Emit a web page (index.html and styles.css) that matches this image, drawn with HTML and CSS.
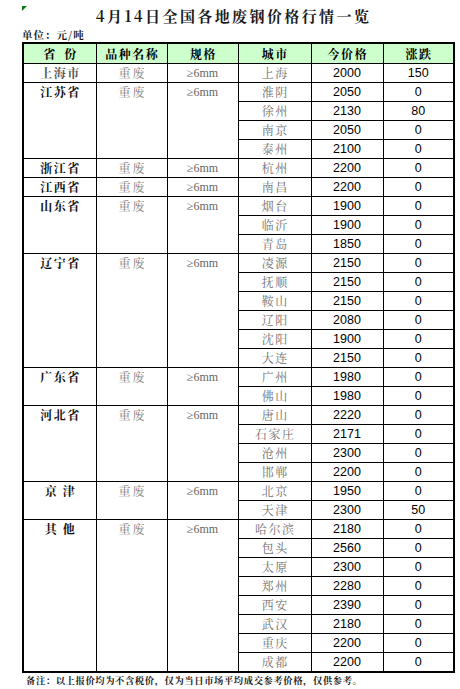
FILE: index.html
```html
<!DOCTYPE html>
<html lang="zh-CN">
<head>
<meta charset="utf-8">
<title>4月14日全国各地废钢价格行情一览</title>
<link rel="stylesheet" href="styles.css">
</head>
<body>
<div class="page">
  <div class="title-row">
    <span class="marker"></span>
    <h1 class="title">4月14日全国各地废钢价格行情一览</h1>
  </div>
  <div class="unit">单位：元/吨</div>
  <table class="prices">
    <colgroup>
      <col class="c-prov"><col class="c-kind"><col class="c-spec"><col class="c-city"><col class="c-price"><col class="c-chg">
    </colgroup>
    <thead>
      <tr><th class="wide">省份</th><th>品种名称</th><th>规格</th><th>城市</th><th>今价格</th><th>涨跌</th></tr>
    </thead>
    <tbody>
      <tr><td class="prov light">上海市</td><td class="kind">重废</td><td class="spec">≥6mm</td><td class="city">上海</td><td class="num">2000</td><td class="num">150</td></tr>

      <tr><td class="prov" rowspan="4">江苏省</td><td class="kind" rowspan="4">重废</td><td class="spec" rowspan="4">≥6mm</td><td class="city">淮阴</td><td class="num">2050</td><td class="num">0</td></tr>
      <tr><td class="city">徐州</td><td class="num">2130</td><td class="num">80</td></tr>
      <tr><td class="city">南京</td><td class="num">2050</td><td class="num">0</td></tr>
      <tr><td class="city">泰州</td><td class="num">2100</td><td class="num">0</td></tr>

      <tr><td class="prov">浙江省</td><td class="kind">重废</td><td class="spec">≥6mm</td><td class="city">杭州</td><td class="num">2200</td><td class="num">0</td></tr>

      <tr><td class="prov">江西省</td><td class="kind">重废</td><td class="spec">≥6mm</td><td class="city">南昌</td><td class="num">2200</td><td class="num">0</td></tr>

      <tr><td class="prov" rowspan="3">山东省</td><td class="kind" rowspan="3">重废</td><td class="spec" rowspan="3">≥6mm</td><td class="city">烟台</td><td class="num">1900</td><td class="num">0</td></tr>
      <tr><td class="city">临沂</td><td class="num">1900</td><td class="num">0</td></tr>
      <tr><td class="city">青岛</td><td class="num">1850</td><td class="num">0</td></tr>

      <tr><td class="prov" rowspan="6">辽宁省</td><td class="kind" rowspan="6">重废</td><td class="spec" rowspan="6">≥6mm</td><td class="city">凌源</td><td class="num">2150</td><td class="num">0</td></tr>
      <tr><td class="city">抚顺</td><td class="num">2150</td><td class="num">0</td></tr>
      <tr><td class="city">鞍山</td><td class="num">2150</td><td class="num">0</td></tr>
      <tr><td class="city">辽阳</td><td class="num">2080</td><td class="num">0</td></tr>
      <tr><td class="city">沈阳</td><td class="num">1900</td><td class="num">0</td></tr>
      <tr><td class="city">大连</td><td class="num">2150</td><td class="num">0</td></tr>

      <tr><td class="prov" rowspan="2">广东省</td><td class="kind" rowspan="2">重废</td><td class="spec" rowspan="2">≥6mm</td><td class="city">广州</td><td class="num">1980</td><td class="num">0</td></tr>
      <tr><td class="city">佛山</td><td class="num">1980</td><td class="num">0</td></tr>

      <tr><td class="prov" rowspan="4">河北省</td><td class="kind" rowspan="4">重废</td><td class="spec" rowspan="4">≥6mm</td><td class="city">唐山</td><td class="num">2220</td><td class="num">0</td></tr>
      <tr><td class="city">石家庄</td><td class="num">2171</td><td class="num">0</td></tr>
      <tr><td class="city">沧州</td><td class="num">2300</td><td class="num">0</td></tr>
      <tr><td class="city">邯郸</td><td class="num">2200</td><td class="num">0</td></tr>

      <tr><td class="prov two" rowspan="2">京津</td><td class="kind" rowspan="2">重废</td><td class="spec" rowspan="2">≥6mm</td><td class="city">北京</td><td class="num">1950</td><td class="num">0</td></tr>
      <tr><td class="city">天津</td><td class="num">2300</td><td class="num">50</td></tr>

      <tr><td class="prov two" rowspan="8">其他</td><td class="kind" rowspan="8">重废</td><td class="spec" rowspan="8">≥6mm</td><td class="city">哈尔滨</td><td class="num">2180</td><td class="num">0</td></tr>
      <tr><td class="city">包头</td><td class="num">2560</td><td class="num">0</td></tr>
      <tr><td class="city">太原</td><td class="num">2300</td><td class="num">0</td></tr>
      <tr><td class="city">郑州</td><td class="num">2280</td><td class="num">0</td></tr>
      <tr><td class="city">西安</td><td class="num">2390</td><td class="num">0</td></tr>
      <tr><td class="city">武汉</td><td class="num">2180</td><td class="num">0</td></tr>
      <tr><td class="city">重庆</td><td class="num">2200</td><td class="num">0</td></tr>
      <tr><td class="city">成都</td><td class="num">2200</td><td class="num">0</td></tr>
    </tbody>
  </table>
  <p class="note">备注：以上报价均为不含税价，仅为当日市场平均成交参考价格，仅供参考。</p>
</div>
</body>
</html>
```

FILE: styles.css
```css
body {
  margin: 0;
  background: #ffffff;
  font-family: "Noto Serif CJK SC", "Noto Sans CJK SC", "Liberation Serif", serif;
  color: #000;
}

.page {
  width: 431px;
  padding-left: 22px;
}

.title-row {
  position: relative;
  height: 28px;
  display: flex;
  align-items: center;
  justify-content: center;
}

.marker {
  position: absolute;
  left: 0;
  top: 6px;
  width: 0;
  height: 0;
  border-top: 5px solid #0b7a12;
  border-right: 5px solid transparent;
}

.title {
  margin: 0 0 0 -8px;
  font-size: 15px;
  font-weight: 700;
  letter-spacing: 2.4px;
  line-height: 28px;
  padding-top: 3px;
  color: #1a1a1a;
}

.unit {
  height: 14px;
  font-size: 10.5px;
  font-weight: 700;
  line-height: 14px;
  letter-spacing: 1px;
  color: #1a1a1a;
}

.prices {
  width: 431px;
  table-layout: fixed;
  border-collapse: collapse;
  border: 2px solid #000;
}

.c-prov { width: 73px; }
.c-kind { width: 71px; }
.c-spec { width: 71px; }
.c-city { width: 73px; }
.c-price { width: 72px; }
.c-chg { width: 71px; }

.prices th,
.prices td {
  border: 1px solid #000;
  padding: 0;
  height: 18px;
  line-height: 18px;
  text-align: center;
  vertical-align: top;
  white-space: nowrap;
}

.prices th {
  height: 19px;
  line-height: 19px;
  background: #ccffcc;
  font-size: 12px;
  font-weight: 700;
  letter-spacing: 1.5px;
  text-indent: 1.5px;
  border-bottom: 1px solid #000;
}

.prices th.wide {
  letter-spacing: 9px;
  text-indent: 9px;
}

.prov {
  font-size: 12px;
  font-weight: 700;
  letter-spacing: 1.6px;
  text-indent: 1.6px;
  color: #111;
}

.prov.light {
  color: #555;
}

.prov.two {
  letter-spacing: 6px;
  text-indent: 6px;
}

.kind {
  font-size: 12px;
  letter-spacing: 2px;
  text-indent: 2px;
  color: #7a7a7a;
}

.spec {
  font-family: "Liberation Serif", serif;
  font-size: 12px;
  color: #666;
}

.city {
  font-size: 12px;
  letter-spacing: 1.5px;
  text-indent: 1.5px;
  color: #707070;
}

.num {
  font-family: "Liberation Sans", sans-serif;
  font-size: 12.5px;
  color: #000;
}

.note {
  margin: 1px 0 0 4px;
  font-size: 9.3px;
  font-weight: 700;
  line-height: 12px;
  letter-spacing: 0.6px;
  color: #1a1a1a;
}
```
